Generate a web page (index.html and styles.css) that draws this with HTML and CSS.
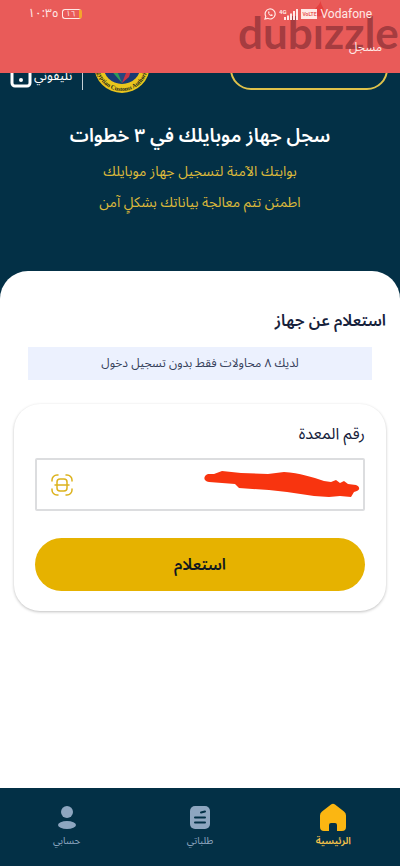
FILE: index.html
```html
<!DOCTYPE html>
<html lang="ar" dir="rtl">
<head>
    <meta charset="utf-8">
    <meta name="viewport" content="width=device-width, initial-scale=1">
    <title>استعلام عن جهاز</title>
    <link rel="stylesheet" href="styles.css">
</head>
<body>

    <div class="toast" role="status">
        <div class="watermark" dir="ltr">dub<span class="flame">ı<svg width="10" height="18" viewBox="0 0 12 20"><path d="M8 0c0 5 4 8 4 13a6 6 0 0 1-12 0C0 9 6 7 8 0z" fill="#e5403f"/></svg></span>zzle</div>
        <div class="status-bar" dir="ltr">
            <div class="status-group">
                <span class="clock">١٠:٣٥</span>
                <span class="battery">١٦</span>
            </div>
            <div class="status-group">
                <svg width="12" height="12" viewBox="0 0 12 12" fill="none" stroke="#ffe9e6">
                    <path d="M1 11l.8-2.6A5 5 0 1 1 3.700 10.300z" stroke-width="1.200"/>
                    <path d="M4.200 3.500c-.5 2.500 1.800 4.900 4.300 4.500l.2-1.200-1.400-.6-.7.6c-.8-.3-1.300-.9-1.500-1.600l.5-.7-.5-1.200z" fill="#ffe9e6" stroke="none"/>
                </svg>
                <svg width="19" height="13" viewBox="0 0 19 13">
                    <text x="0" y="6" font-size="6" font-weight="bold" fill="#ffe9e6" font-family="Roboto, sans-serif">4G</text>
                    <path d="M6 12V9M9 12V7.500M12 12V5.500M15 12V3M18 12V1" stroke="#ffe9e6" stroke-width="2"/>
                </svg>
                <span class="volte">VoLTE</span>
                <span class="carrier">Vodafone</span>
            </div>
        </div>
        <p class="toast-text">مسجل</p>
    </div>

    <header class="app-bar">
        <a href="#" class="login-btn" aria-label="الحساب"></a>
        <div class="brand">
            <svg class="customs-logo" width="58" height="58" viewBox="0 0 58 58">
                <defs><path id="ring" d="M3 29a26 26 0 0 0 52 0"/></defs>
                <circle cx="29" cy="29" r="28" fill="#e9c51d"/>
                <circle cx="29" cy="29" r="19" fill="#173a73"/>
                <path d="M15 31l14 16V26z" fill="#2d9b57"/>
                <path d="M29 26v21l7-6 4-13z" fill="#c83343"/>
                <path d="M24 35l5 12 4-10-4-8z" fill="#28467f"/>
                <text font-size="6" font-weight="bold" font-family="Liberation Serif, serif" fill="#20271d" text-anchor="middle" direction="ltr"><textPath href="#ring" startOffset="50%">Egyptian Customs Authority</textPath></text>
            </svg>
            <span class="divider"></span>
            <span class="brand-name">تليفوني</span>
            <svg class="phone-logo" width="22" height="36" viewBox="0 0 22 36" fill="none">
                <rect x="2" y="2" width="18" height="32" rx="3" stroke="#fff" stroke-width="3"/>
                <circle cx="11" cy="28" r="2" fill="#fff"/>
            </svg>
        </div>
    </header>

    <section class="hero">
        <h1>سجل جهاز موبايلك في ٣ خطوات</h1>
        <p>بوابتك الآمنة لتسجيل جهاز موبايلك</p>
        <p>اطمئن تتم معالجة بياناتك بشكلٍ آمن</p>
    </section>

    <main class="panel">
        <h2>استعلام عن جهاز</h2>
        <p class="notice">لديك ٨ محاولات فقط بدون تسجيل دخول</p>

        <form class="card">
            <label for="deviceNumber">رقم المعدة</label>
            <div class="field">
                <input type="text" id="deviceNumber">
                <svg class="scribble" width="156" height="30" viewBox="0 0 156 30">
                    <path d="M4 3L10 3 18 0 37 2 64 3 80 1C96 2 108 6 120 10L127 11 132 9 136 12 140 10 144 13 152 14C157 16 156 20 150 21L147 26 136 25 125 26 110 25 83 21 65 19 35 17 31 13 5 11C-1 10-1 5 4 3z" fill="#f8340f"/>
                </svg>
                <button type="button" class="scan-btn" aria-label="مسح">
                    <svg width="22" height="22" viewBox="0 0 22 22" fill="none" stroke="#dcb21d" stroke-width="1.500" stroke-linecap="round">
                        <path d="M1 7V6a5 5 0 0 1 5-5h1M15 1h1a5 5 0 0 1 5 5v1M21 15v1a5 5 0 0 1-5 5h-1M7 21H6a5 5 0 0 1-5-5v-1"/>
                        <rect x="6" y="5" width="10" height="12" rx="3"/>
                        <path d="M4 11h14"/>
                    </svg>
                </button>
            </div>
            <button type="submit" class="submit-btn">استعلام</button>
        </form>
    </main>

    <nav class="tabs">
        <a href="#" class="tab active">
            <svg width="28" height="28" viewBox="0 0 28 28">
                <path d="M12 1.500a3.500 3.500 0 0 1 4 0l9 7a5 5 0 0 1 2 4V24a4 4 0 0 1-4 4h-5v-6a2 2 0 0 0-2-2h-4a2 2 0 0 0-2 2v6H5a4 4 0 0 1-4-4V12.500a5 5 0 0 1 2-4z" fill="#fbb612"/>
            </svg>
            <span>الرئيسية</span>
        </a>
        <a href="#" class="tab">
            <svg width="28" height="28" viewBox="0 0 28 28">
                <rect x="4" y="3" width="20" height="23" rx="5" fill="#8ea6c0"/>
                <path d="M15 9.500l4-1M9 14.500h10M9 19.500h10" stroke="#033046" stroke-width="2" stroke-linecap="round"/>
            </svg>
            <span>طلباتي</span>
        </a>
        <a href="#" class="tab">
            <svg width="28" height="28" viewBox="0 0 28 28" fill="#8ea6c0">
                <circle cx="14" cy="9" r="6"/>
                <ellipse cx="14" cy="22" rx="9" ry="4"/>
            </svg>
            <span>حسابي</span>
        </a>
    </nav>

</body>
</html>
```
FILE: styles.css
```css
* {
    box-sizing: border-box;
}

body {
    margin: 0;
    min-height: 100vh;
    display: flex;
    flex-direction: column;
    font-family: "Noto Sans Arabic", "Noto Sans", sans-serif;
    background-color: #033046;
    color: #16213b;
}

h1, h2, p {
    margin: 0;
}

/* red message lying over the app bar */
.toast {
    position: absolute;
    top: 0;
    left: 0;
    right: 0;
    height: 73px;
    overflow: hidden;
    background-color: #e95b59;
    color: #ffe9e6;
    z-index: 1;
}

.status-bar {
    position: relative;
    display: flex;
    justify-content: space-between;
    padding: 4px 28px 0;
    height: 24px;
}

.status-group {
    display: flex;
    align-items: center;
    gap: 3px;
}

.clock {
    font-size: 12px;
    line-height: 20px;
}

.battery {
    width: 20px;
    height: 10px;
    border: 1px solid #ffe9e6;
    border-right: 3px solid #f4a52c;
    border-radius: 3px;
    font-size: 8px;
    line-height: 8px;
    text-align: center;
}

.volte {
    padding: 0 1px;
    background-color: #ffe9e6;
    color: #e95b59;
    font: bold 5px/10px Roboto, sans-serif;
}

.carrier {
    font: 12px/20px Roboto, sans-serif;
}

.toast-text {
    position: relative;
    padding: 14px 18px 0;
    font-size: 12px;
    line-height: 20px;
}

.watermark {
    position: absolute;
    top: 2px;
    left: 238px;
    font: bold 44px/60px Lato, sans-serif;
    color: rgba(80, 22, 32, 0.45);
}

.flame {
    position: relative;
}

.flame svg {
    position: absolute;
    top: -6px;
    left: 1px;
}

.app-bar {
    display: flex;
    justify-content: space-between;
    align-items: flex-end;
    height: 94px;
    padding: 0 12px 0 10px;
}

.login-btn {
    width: 158px;
    height: 42px;
    margin-bottom: 4px;
    border: 2px solid #dfc24b;
    border-radius: 21px;
}

.brand {
    display: flex;
    align-items: flex-end;
    gap: 10px;
    color: #fff;
}

.divider {
    width: 1px;
    height: 40px;
    margin-bottom: 4px;
    background-color: #c5d0d6;
}

.brand-name {
    font-size: 13px;
    line-height: 36px;
    margin-left: -8px;
}

.phone-logo {
    margin-bottom: 6px;
}

.hero {
    padding: 26px 16px 53px;
    text-align: center;
}

h1 {
    margin-bottom: 4px;
    font-size: 19px;
    line-height: 32px;
    font-weight: 600;
    color: #fff;
}

.hero p {
    font-size: 14px;
    line-height: 31px;
    color: #dcb93b;
}

.panel {
    flex: 1;
    padding: 34px 14px;
    background-color: #fff;
    border-radius: 28px 28px 0 0;
}

h2 {
    font-size: 16px;
    line-height: 32px;
    font-weight: 600;
}

.notice {
    margin: 10px 14px 24px;
    background-color: #ecf1fe;
    font-size: 12px;
    line-height: 33px;
    text-align: center;
    color: #35405a;
}

.card {
    display: flex;
    flex-direction: column;
    padding: 16px 21px 20px;
    border-radius: 26px;
    background-color: #fff;
    box-shadow: 0 1px 3px rgba(0, 0, 0, 0.25);
}

.card label {
    margin-bottom: 10px;
    font-size: 16px;
    line-height: 28px;
}

.field {
    position: relative;
    display: flex;
    align-items: center;
    height: 53px;
    margin-bottom: 27px;
    padding: 0 4px 0 14px;
    border: 2px solid #dcdddf;
    border-radius: 2px;
}

.field input {
    flex: 1;
    min-width: 0;
    height: 40px;
    border: none;
    outline: none;
    background: none;
    font: inherit;
}

.scribble {
    position: absolute;
    top: 11px;
    right: 3px;
}

.scan-btn {
    display: flex;
    padding: 0;
    border: none;
    background: none;
}

.submit-btn {
    height: 53px;
    border: none;
    border-radius: 27px;
    background-color: #e6b200;
    font-family: inherit;
    font-size: 16px;
    font-weight: 600;
    color: #111820;
    cursor: pointer;
}

.tabs {
    display: flex;
    height: 78px;
    background-color: #033046;
}

.tab {
    flex: 1;
    display: flex;
    flex-direction: column;
    align-items: center;
    padding-top: 15px;
    font-size: 10px;
    line-height: 20px;
    text-decoration: none;
    color: #8ea6c0;
}

.active {
    font-weight: 600;
    color: #f2c14b;
}
```
